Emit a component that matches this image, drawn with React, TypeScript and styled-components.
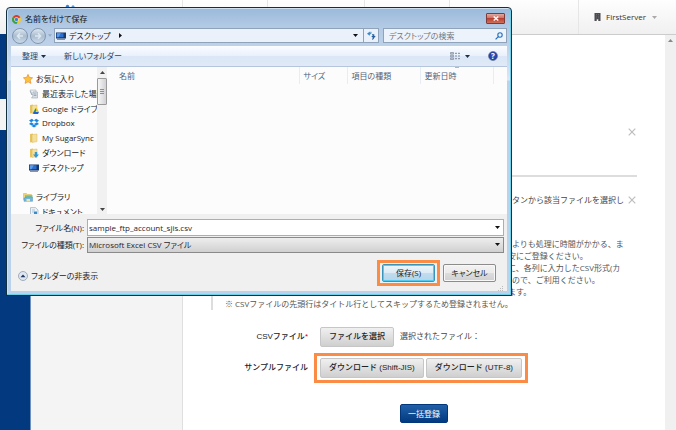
import React from "react";
import styled, { createGlobalStyle, css } from "styled-components";

const uiFont = `"Open Sans", "Noto Sans CJK JP", sans-serif`;
const formFont = `"Liberation Sans", "Noto Sans CJK JP", sans-serif`;

const GlobalStyle = createGlobalStyle`
  *, *::before, *::after { box-sizing: border-box; }
  body { margin: 0; background: #fff; overflow: hidden; }
  body, button, input, select { font-family: ${uiFont}; font-size: 8px; line-height: 12px; }
  body { color: #444; }
  button, input, select { color: inherit; margin: 0; padding: 0; }
  svg { display: block; flex: none; }
`;

/* ---------- Page ---------- */

const Page = styled.div`
  position: relative;
  display: flex;
  flex-direction: column;
  height: 100vh;
  overflow: hidden;
`;

const Header = styled.header`
  display: grid;
  grid-template-columns: 183px 85px 97px 85px 129px 1fr;
  height: 34px;
  flex: none;
  background: linear-gradient(#fefefe, #f0f0f0);
`;

const HeaderCell = styled.div`
  display: flex;
  align-items: center;
  border-right: 1px solid #e6e6e6;
  &:last-child { border-right: 0; }
`;

const LogoCell = styled(HeaderCell)`
  align-items: flex-start;
  padding: 4px 0 0 64px;
`;

const AccountButton = styled.button`
  display: flex;
  align-items: center;
  gap: 5px;
  padding: 0 15px;
  border: 0;
  background: none;
  color: #333;
  svg:last-child { margin-left: 1px; }
`;

const Body = styled.div`
  display: flex;
  flex: 1;
  min-height: 0;
`;

const Rail = styled.nav`
  width: 31px;
  flex: none;
  padding-top: 65px;
  background: #02397f;
  border-right: 1px solid #6e92bd;
`;

const RailCurrent = styled.div`
  height: 31px;
  background: #f4f4f4;
`;

const SidePanel = styled.aside`
  width: 152px;
  flex: none;
  background: #f4f4f4;
  border-right: 1px solid #dfdfdf;
`;

const Content = styled.main`
  flex: 1;
  min-width: 0;
  padding: 0 28px;
  border-top: 1px solid #ccc;
  background: #fff;
`;

const PageScrollbar = styled.div`
  display: flex;
  justify-content: center;
  width: 11px;
  flex: none;
  padding-top: 4px;
  border-top: 1px solid #ccc;
  background: #f0f0f0;
`;

const Notice = styled.section`
  display: flex;
  justify-content: flex-end;
  align-items: center;
  height: 142px;
  padding-top: 53px;
  border-bottom: 2px solid #ddd;
`;

const Guide = styled.section`
  display: flex;
  justify-content: flex-end;
  align-items: center;
  height: 46px;
  gap: 3px;
`;

const CloseButton = styled.button`
  display: flex;
  padding: 1px;
  border: 0;
  background: none;
`;

const Notes = styled.ul`
  margin: 15px 0 0;
  padding: 0 0 0 12px;
  list-style: none;
  border-left: 2px solid #ddd;
  white-space: nowrap;
  color: #555;
`;

const NoteLine = styled.li<{ $indent?: number }>`
  height: 12px;
  padding-left: ${(p) => p.$indent ?? 0}px;
`;

const Form = styled.form`
  display: flex;
  flex-direction: column;
  padding-top: 11px;
  font-family: ${formFont};
`;

const FormRow = styled.div`
  display: grid;
  grid-template-columns: 97px 1fr;
  align-items: center;
  gap: 6px;
  height: 31px;
`;

const FormLabel = styled.label`
  text-align: right;
  color: #222;
  font-weight: 500;
`;

const Required = styled.span`
  color: #d00;
`;

const FieldGroup = styled.div<{ $marked?: boolean }>`
  display: flex;
  align-items: center;
  justify-self: start;
  gap: 2px;
  padding: 2px 3px;
  border: 3px solid ${(p) => (p.$marked ? "#fb8c45" : "transparent")};
  white-space: nowrap;
`;

const GrayButton = styled.button`
  height: 20px;
  padding: 0 8px;
  border: 1px solid #c6c6c6;
  border-radius: 2px;
  background: linear-gradient(#f0f0f0, #cfcfcf);
  color: #222;
  font-family: ${formFont};
  font-weight: 500;
  white-space: nowrap;
`;

const FileStatus = styled.span`
  padding-left: 4px;
  color: #444;
`;

const SubmitButton = styled.button`
  align-self: center;
  height: 19px;
  margin-top: 21px;
  padding: 0 7px;
  border: 1px solid #03377c;
  border-radius: 2px;
  background: linear-gradient(#2060a8, #023a80);
  color: #fff;
`;

/* ---------- Save dialog ---------- */

const Dialog = styled.div`
  position: absolute;
  top: 7px;
  left: 6px;
  right: 164px;
  padding: 0 4px 4px;
  border: 1px solid #12303f;
  border-radius: 4px 4px 0 0;
  background: linear-gradient(#9ab9da, #b4cbe5 20px, #bdd1e9 38px, #dae8f7 72px, #bbd2ec 73px);
  box-shadow: inset -1px -1px #6fd0ea, inset 1px 1px #cfe0f2;
  color: #222;
  &, button, input, select { font-feature-settings: "palt"; }
`;

const TitleBar = styled.header`
  display: flex;
  align-items: center;
  gap: 4px;
  height: 20px;
  padding: 2px 2px 0 1px;
`;

const Title = styled.h1`
  flex: 1;
  margin: 0;
  font-size: 8px;
  font-weight: 400;
  color: #111;
`;

const WindowClose = styled.button`
  display: grid;
  place-items: center;
  width: 19px;
  height: 11px;
  margin-top: -2px;
  border: 1px solid #7d3b3a;
  border-radius: 1px;
  background: linear-gradient(#e2a79d, #cf7265 45%, #b9402f 50%, #d0705c);
`;

const NavBar = styled.div`
  display: flex;
  align-items: center;
  height: 18px;
  padding: 0 0 3px 1px;
`;

const RoundButton = styled.button`
  display: grid;
  place-items: center;
  width: 16px;
  height: 16px;
  margin-right: 2px;
  border: 1px solid #8296ad;
  border-radius: 50%;
  background: linear-gradient(#dce6f0, #aabdd0 50%, #c8d9ea);
`;

const NavChevron = styled.span`
  width: 6px;
`;

const AddressBar = styled.div`
  display: flex;
  align-items: center;
  gap: 3px;
  flex: 1;
  height: 15px;
  padding: 0 5px 0 1px;
  border: 1px solid #8fa3ba;
  background: #eaf1fa;
`;

const AddressDrop = styled.button`
  display: flex;
  margin-left: auto;
  border: 0;
  background: none;
`;

const Crumb = styled.span`
  margin-right: 5px;
`;

const RefreshButton = styled.button`
  display: grid;
  place-items: center;
  width: 16px;
  height: 15px;
  margin-left: -1px;
  border: 1px solid #8fa3ba;
  background: #eaf1fa;
`;

const SearchBox = styled.label`
  display: flex;
  align-items: center;
  width: 124px;
  height: 15px;
  margin-left: 4px;
  padding: 0 3px 0 5px;
  border: 1px solid #8fa3ba;
  background: #edf3fb;
`;

const SearchInput = styled.input`
  flex: 1;
  min-width: 0;
  border: 0;
  background: none;
  &::placeholder { color: #777; opacity: 1; }
`;

const Toolbar = styled.div`
  display: flex;
  align-items: center;
  height: 21px;
  padding: 0 9px 0 11px;
  border-bottom: 1px solid #b5c6dc;
  background: linear-gradient(#fbfdff, #e9f1fb 48%, #dbe7f6 52%, #dfe9f7);
`;

const ToolButton = styled.button`
  display: flex;
  align-items: center;
  gap: 3px;
  border: 0;
  background: none;
  color: #2c4768;
  & + & { margin-left: 18px; }
`;

const ToolGroup = styled.div`
  display: flex;
  align-items: center;
  gap: 5px;
  margin-left: auto;
`;

const HelpMark = styled.button`
  display: grid;
  place-items: center;
  width: 10px;
  height: 10px;
  margin-left: 13px;
  border: 1px solid #707ea6;
  border-radius: 50%;
  background: radial-gradient(#3f62d0, #12288a);
  color: #fff;
  line-height: 8px;
  font-weight: 700;
`;

const Explorer = styled.div`
  display: grid;
  grid-template-columns: 86px 10px 1fr;
  height: 147px;
  background: #fcfcfd;
`;

const TreePane = styled.div`
  overflow: hidden;
  padding-top: 5px;
`;

const Tree = styled.ul`
  display: grid;
  grid-template-rows: repeat(10, 1fr);
  height: 147px;
  margin: 0;
  padding: 0;
  list-style: none;
`;

const TreeItem = styled.li<{ $root?: boolean }>`
  display: flex;
  align-items: center;
  gap: 3px;
  padding-left: ${(p) => (p.$root ? 12 : 18)}px;
  white-space: nowrap;
  min-height: 0;
`;

const TreeScrollbar = styled.div`
  display: grid;
  grid-template-rows: 11px 27px 1fr 10px;
  justify-items: center;
  align-items: center;
  background: #f1f1f2;
`;

const Thumb = styled.div`
  display: grid;
  place-items: center;
  justify-self: stretch;
  align-self: stretch;
  border: 1px solid #9a9a9a;
  border-radius: 1px;
  background: linear-gradient(90deg, #f6f6f6, #d2d2d4);
`;

const FileTable = styled.table`
  width: 100%;
  align-self: start;
  border-collapse: collapse;
  table-layout: fixed;
  th {
    height: 17px;
    padding: 0 0 0 4px;
    border-right: 1px solid #e6edf5;
    text-align: left;
    font-weight: 400;
    color: #51637c;
    white-space: nowrap;
  }
  th:first-child { padding-left: 12px; }
  th:last-child { border-right: 0; }
`;

const SortedHead = styled.th`
  background: linear-gradient(#8cc4e6, #8cc4e6) 34px 0 / 4px 1px no-repeat;
`;

const Column = styled.col<{ $width?: number }>`
  width: ${(p) => (p.$width ? `${p.$width}px` : "auto")};
`;

const Footer = styled.div`
  padding: 5px 3px 4px 0;
  background: #f0f0f0;
`;

const FooterRow = styled.div`
  display: grid;
  grid-template-columns: 73px 1fr;
  align-items: center;
  gap: 3px;
  height: 17px;
`;

const FooterLabel = styled.label`
  text-align: right;
  white-space: nowrap;
`;

const ComboBox = styled.div<{ $gray?: boolean }>`
  display: flex;
  align-items: center;
  height: ${(p) => (p.$gray ? 16 : 17)}px;
  padding: 0 3px 0 0;
  border: 1px solid ${(p) => (p.$gray ? "#8a8a8a" : "#8db6d8")};
  background: ${(p) => (p.$gray ? "linear-gradient(#eeeeee, #d0d0d0)" : "#fff")};
`;

const fieldStyle = css`
  flex: 1;
  min-width: 0;
  height: 14px;
  padding: 0 1px;
  border: 0;
  outline: 0;
  background: none;
  appearance: none;
  color: #2a2530;
`;
const NameInput = styled.input`${fieldStyle}`;
const TypeSelect = styled.select`${fieldStyle}`;

const Actions = styled.div`
  display: flex;
  align-items: center;
  margin-top: 7px;
  padding: 0 8px 0 7px;
`;

const FolderToggle = styled.button`
  display: flex;
  align-items: center;
  gap: 3px;
  margin: 6px auto 0 0;
  border: 0;
  background: none;
`;

const ButtonMark = styled.div`
  padding: 1px 2px;
  margin-right: 3px;
  border: 3px solid #fb8c45;
`;

const DialogButton = styled.button<{ $primary?: boolean }>`
  display: block;
  width: 53px;
  height: 18px;
  border: 1px solid ${(p) => (p.$primary ? "#3a94b8" : "#8c8c8c")};
  border-radius: 2px;
  background: ${(p) =>
    p.$primary
      ? "linear-gradient(#eef6fb, #dcebf5 48%, #c0dcee 52%, #b5d5ea)"
      : "linear-gradient(#f2f2f2, #ebebeb 48%, #dcdcdc 52%, #d0d0d0)"};
  box-shadow: inset 0 0 0 1px ${(p) => (p.$primary ? "#52ccf3" : "#f8f8f8")};
`;

const Grip = styled.div`
  display: flex;
  justify-content: flex-end;
  height: 1px;
`;

/* ---------- Icons ---------- */

const Down = ({ color = "#111", size = 5 }: { color?: string; size?: number }) => (
  <svg width={size} height="3" viewBox="0 0 5 3"><path d="M0 0h5L2.5 3z" fill={color} /></svg>
);
const Up = ({ color = "#444" }: { color?: string }) => (
  <svg width="5" height="3" viewBox="0 0 5 3"><path d="M0 3h5L2.5 0z" fill={color} /></svg>
);
const Cross = () => (
  <svg width="8" height="8" viewBox="0 0 8 8"><path d="M.7.7l6.6 6.6M7.3.7L.7 7.3" stroke="#bdbdbd" strokeWidth="1.2" /></svg>
);
const Building = () => (
  <svg width="7" height="8" viewBox="0 0 7 8">
    <path d="M.5 0h6v8h-6z" fill="#4b4b50" />
    <path d="M2 1.5h1M4 1.5h1M2 3.2h1M4 3.2h1M2 4.9h1M4 4.9h1" stroke="#77777b" strokeWidth=".7" />
    <path d="M2.7 6.3h1.6V8H2.7z" fill="#fff" />
  </svg>
);
const Logo = () => (
  <svg width="12" height="6" viewBox="0 0 12 6">
    <circle cx="3.5" cy="2.4" r="1.7" fill="#3c83cf" /><circle cx="9" cy="2.7" r="1.5" fill="#5b9be0" />
  </svg>
);
const Chrome = () => (
  <svg width="9" height="9" viewBox="0 0 20 20">
    <circle cx="10" cy="10" r="10" fill="#f5c928" />
    <path d="M10 10L1.3 5A10 10 0 0 1 18.7 5z" fill="#dc3b2c" />
    <path d="M10 10L1.3 5A10 10 0 0 0 10 20l4-7z" fill="#3c9d4b" />
    <circle cx="10" cy="10" r="5" fill="#fff" /><circle cx="10" cy="10" r="3.8" fill="#3d7de0" />
  </svg>
);
const Monitor = () => (
  <svg width="10" height="8" viewBox="0 0 10 8">
    <path d="M0 .5h10v6H0z" fill="#17386f" /><path d="M.8 1.2h6.7v4H.8z" fill="#2e6fd2" />
    <path d="M.8 1.2h4L2.5 5.2H.8z" fill="#5c9cec" /><path d="M1 7.2h8" stroke="#50668a" />
  </svg>
);
const Arrow = ({ back }: { back?: boolean }) => (
  <svg width="8" height="8" viewBox="0 0 8 8">
    <path d={back ? "M7 4H1.6M4 1.3L1.3 4 4 6.7" : "M1 4h5.4M4 1.3L6.7 4 4 6.7"} fill="none" stroke="#dfe8f1" strokeWidth="1.4" />
  </svg>
);
const Refresh = () => (
  <svg width="9" height="9" viewBox="0 0 9 9">
    <path d="M2.9.6v4.2L0 2.7z" fill="#2f86cc" /><path d="M2.4 2.7h1.5V.8" fill="none" stroke="#2f86cc" strokeWidth="1" />
    <path d="M4.2 5h4.6L6.5 7.6z" fill="#275f9e" /><path d="M5 3.9h1.7v2.2c0 1-.4 1.7-1.3 2.3" fill="none" stroke="#275f9e" strokeWidth="1.2" />
  </svg>
);
const Search = () => (
  <svg width="8" height="8" viewBox="0 0 8 8">
    <circle cx="5" cy="3" r="2.2" fill="#e9f4ff" stroke="#2870bd" strokeWidth="1.1" /><path d="M3.4 4.6L.6 7.4" stroke="#2870bd" strokeWidth="1.3" />
  </svg>
);
const ViewMode = () => (
  <svg width="10" height="8" viewBox="0 0 10 8">
    <path d="M.5.5h3v1.6h-3zM.5 3.2h3v1.6h-3zM.5 5.9h3v1.6h-3z" fill="#c3cbd6" stroke="#6f7d90" strokeWidth=".6" />
    <path d="M5 1.3h2M8 1.3h2M5 4h2M8 4h2M5 6.7h2M8 6.7h2" stroke="#7b899c" strokeWidth="1" />
  </svg>
);
const Star = () => (
  <svg width="10" height="10" viewBox="0 0 10 10">
    <path d="M5 .4l1.4 3 3.2.4-2.4 2.3.7 3.3L5 7.8 2.1 9.4l.7-3.3L.4 3.8l3.2-.4z" fill="#fbc23b" stroke="#ec8a2d" strokeWidth=".7" />
  </svg>
);
const Recent = () => (
  <svg width="10" height="10" viewBox="0 0 10 10">
    <path d="M1 1h6v5H3z" fill="#e9edf0" stroke="#a7b0ba" strokeWidth=".6" /><path d="M4 3h4.5v6H2.5L4 7z" fill="#d9dfe5" stroke="#99a4b0" strokeWidth=".6" />
    <path d="M1.2 2.2L3 6M5 5h2.4M5 6.5h2.4" stroke="#8195ab" strokeWidth=".7" />
  </svg>
);
const Folder = ({ badge }: { badge?: "drive" | "down" }) => (
  <svg width="10" height="10" viewBox="0 0 10 10">
    <path d="M1 1l3-.6V9L1 9.6z" fill="#e6c560" /><path d="M3 1.6L8 1v7.6L3 9.4z" fill="#f4e09a" stroke="#d8b85a" strokeWidth=".5" />
    {badge === "drive" && (<><path d="M6.5 4.2L4 9h2l2-3.5z" fill="#1d9a50" /><path d="M6.5 4.2h1.3L10 8H8z" fill="#f1c51b" /><path d="M5 8h5L9 10H4z" fill="#2263cf" /></>)}
    {badge === "down" && <path d="M5.8 4h2.4v2.4H10L7 10 4 6.4h1.8z" fill="#3297d8" />}
  </svg>
);
const Dropbox = () => (
  <svg width="10" height="10" viewBox="0 0 10 10">
    <path d="M2.9.8L5 2.5 2.1 4.3 0 2.6zM7.1.8L5 2.5l2.9 1.8L10 2.6zM0 6l2.1-1.7L5 6 2.9 7.6zM10 6L7.9 4.3 5 6l2.1 1.6zM2.5 8l2.5-1.6L7.5 8 5 9.6z" fill="#1787e0" />
  </svg>
);
const Library = () => (
  <svg width="10" height="10" viewBox="0 0 10 10">
    <path d="M.5 1.5h3l1 1h4v5h-8z" fill="#efd477" stroke="#cfae50" strokeWidth=".5" /><path d="M2 3.2h7.5v3H2z" fill="#7cc28f" />
    <path d="M1 9.3V6.2c2-1.5 6-1.5 8.5-.8v3.9z" fill="#72b6df" stroke="#5192bd" strokeWidth=".5" /><path d="M3.5 7h3.5v2.3H3.5z" fill="#f2e5a8" />
  </svg>
);
const Doc = () => (
  <svg width="10" height="10" viewBox="0 0 10 10">
    <path d="M1.5.6h5L9 3v6.5H1.5z" fill="#edf3f8" stroke="#8ca0b4" strokeWidth=".6" /><path d="M3 3h3M3 5h2" stroke="#8eb2d0" strokeWidth=".7" />
    <path d="M5 4.5h3v4H5z" fill="#3b8ac5" />
  </svg>
);

const treeItems: { label: string; icon: React.ReactNode; root?: boolean }[] = [
  { label: "お気に入り", icon: <Star />, root: true },
  { label: "最近表示した場所", icon: <Recent /> },
  { label: "Google ドライブ", icon: <Folder badge="drive" /> },
  { label: "Dropbox", icon: <Dropbox /> },
  { label: "My SugarSync", icon: <Folder /> },
  { label: "ダウンロード", icon: <Folder badge="down" /> },
  { label: "デスクトップ", icon: <Monitor /> },
  { label: "", icon: null },
  { label: "ライブラリ", icon: <Library />, root: true },
  { label: "ドキュメント", icon: <Doc /> },
];

const notes = [
  { text: "よりも処理に時間がかかる、ま", indent: 287 },
  { text: "安にご登録ください。", indent: 283 },
  { text: "に、各列に入力したCSV形式(カ", indent: 283 },
  { text: "ので、ご利用ください。", indent: 287 },
  { text: "ます。", indent: 283 },
  { text: "※ CSVファイルの先頭行はタイトル行としてスキップするため登録されません。", indent: 0 },
];

function SaveDialog() {
  return (
    <Dialog role="dialog" aria-labelledby="save-title">
      <TitleBar>
        <Chrome />
        <Title id="save-title">名前を付けて保存</Title>
        <WindowClose aria-label="閉じる">
          <svg width="6" height="5" viewBox="0 0 6 5"><path d="M.7.5l4.6 4M5.3.5l-4.6 4" stroke="#fff" strokeWidth="1.4" /></svg>
        </WindowClose>
      </TitleBar>
      <NavBar>
        <RoundButton aria-label="戻る"><Arrow back /></RoundButton>
        <RoundButton aria-label="進む"><Arrow /></RoundButton>
        <NavChevron><Down color="#93a8c0" size={4} /></NavChevron>
        <AddressBar>
          <Monitor />
          <Crumb>デスクトップ</Crumb>
          <svg width="3" height="5" viewBox="0 0 3 5"><path d="M0 0v5l3-2.5z" fill="#111" /></svg>
          <AddressDrop aria-label="履歴"><Down /></AddressDrop>
        </AddressBar>
        <RefreshButton aria-label="更新"><Refresh /></RefreshButton>
        <SearchBox>
          <SearchInput type="search" aria-label="検索" placeholder="デスクトップの検索" />
          <Search />
        </SearchBox>
      </NavBar>
      <Toolbar>
        <ToolButton>整理<Down color="#1e3048" /></ToolButton>
        <ToolButton>新しいフォルダー</ToolButton>
        <ToolGroup>
          <ViewMode />
          <Down color="#1e3048" />
          <HelpMark aria-label="ヘルプ">?</HelpMark>
        </ToolGroup>
      </Toolbar>
      <Explorer>
        <TreePane>
          <Tree>
            {treeItems.map((item, i) => (
              <TreeItem key={i} $root={item.root}>{item.icon}{item.label}</TreeItem>
            ))}
          </Tree>
        </TreePane>
        <TreeScrollbar>
          <Up />
          <Thumb>
            <svg width="4" height="5" viewBox="0 0 4 5"><path d="M0 .5h4M0 2.5h4M0 4.5h4" stroke="#777" strokeWidth=".8" /></svg>
          </Thumb>
          <span />
          <Down color="#444" />
        </TreeScrollbar>
        <FileTable>
          <colgroup>
            <Column /><Column $width={48} /><Column $width={73} /><Column $width={73} /><Column $width={14} />
          </colgroup>
          <thead>
            <tr><th>名前</th><th>サイズ</th><th>項目の種類</th><SortedHead>更新日時</SortedHead><th aria-hidden="true" /></tr>
          </thead>
        </FileTable>
      </Explorer>
      <Footer>
        <FooterRow>
          <FooterLabel htmlFor="file-name">ファイル名(N):</FooterLabel>
          <ComboBox><NameInput id="file-name" defaultValue="sample_ftp_account_sjis.csv" /><Down /></ComboBox>
        </FooterRow>
        <FooterRow>
          <FooterLabel htmlFor="file-type">ファイルの種類(T):</FooterLabel>
          <ComboBox $gray>
            <TypeSelect id="file-type"><option>Microsoft Excel CSV ファイル</option></TypeSelect>
            <Down />
          </ComboBox>
        </FooterRow>
        <Actions>
          <FolderToggle>
            <svg width="10" height="10" viewBox="0 0 10 10">
              <circle cx="5" cy="5" r="4.5" fill="#dfe7f1" stroke="#8f9db0" strokeWidth=".8" /><path d="M2.5 6.2h5L5 3.6z" fill="#1f3862" />
            </svg>
            フォルダーの非表示
          </FolderToggle>
          <ButtonMark><DialogButton $primary>保存(S)</DialogButton></ButtonMark>
          <DialogButton>キャンセル</DialogButton>
        </Actions>
        <Grip>
          <svg width="6" height="6" viewBox="0 0 6 6"><path d="M4 0h1v1H4zM2 2h1v1H2zM4 2h1v1H4zM0 4h1v1H0zM2 4h1v1H2zM4 4h1v1H4z" fill="#bbb" /></svg>
        </Grip>
      </Footer>
    </Dialog>
  );
}

export default function App() {
  return (
    <Page>
      <GlobalStyle />
      <Header>
        <LogoCell><Logo /></LogoCell>
        <HeaderCell /><HeaderCell /><HeaderCell /><HeaderCell />
        <HeaderCell>
          <AccountButton><Building />FirstServer<Down color="#aaa" /></AccountButton>
        </HeaderCell>
      </Header>
      <Body>
        <Rail><RailCurrent /></Rail>
        <SidePanel />
        <Content>
          <Notice><CloseButton aria-label="閉じる"><Cross /></CloseButton></Notice>
          <Guide>ボタンから該当ファイルを選択し<CloseButton aria-label="閉じる"><Cross /></CloseButton></Guide>
          <Notes>
            {notes.map((note) => <NoteLine key={note.text} $indent={note.indent}>{note.text}</NoteLine>)}
          </Notes>
          <Form onSubmit={(e) => e.preventDefault()}>
            <FormRow>
              <FormLabel htmlFor="csv-file">CSVファイル<Required>*</Required></FormLabel>
              <FieldGroup>
                <GrayButton id="csv-file" type="button">ファイルを選択</GrayButton>
                <FileStatus>選択されたファイル：</FileStatus>
              </FieldGroup>
            </FormRow>
            <FormRow>
              <FormLabel as="span">サンプルファイル</FormLabel>
              <FieldGroup $marked>
                <GrayButton type="button">ダウンロード (Shift-JIS)</GrayButton>
                <GrayButton type="button">ダウンロード (UTF-8)</GrayButton>
              </FieldGroup>
            </FormRow>
            <SubmitButton>一括登録</SubmitButton>
          </Form>
        </Content>
        <PageScrollbar><Up color="#888" /></PageScrollbar>
      </Body>
      <SaveDialog />
    </Page>
  );
}
